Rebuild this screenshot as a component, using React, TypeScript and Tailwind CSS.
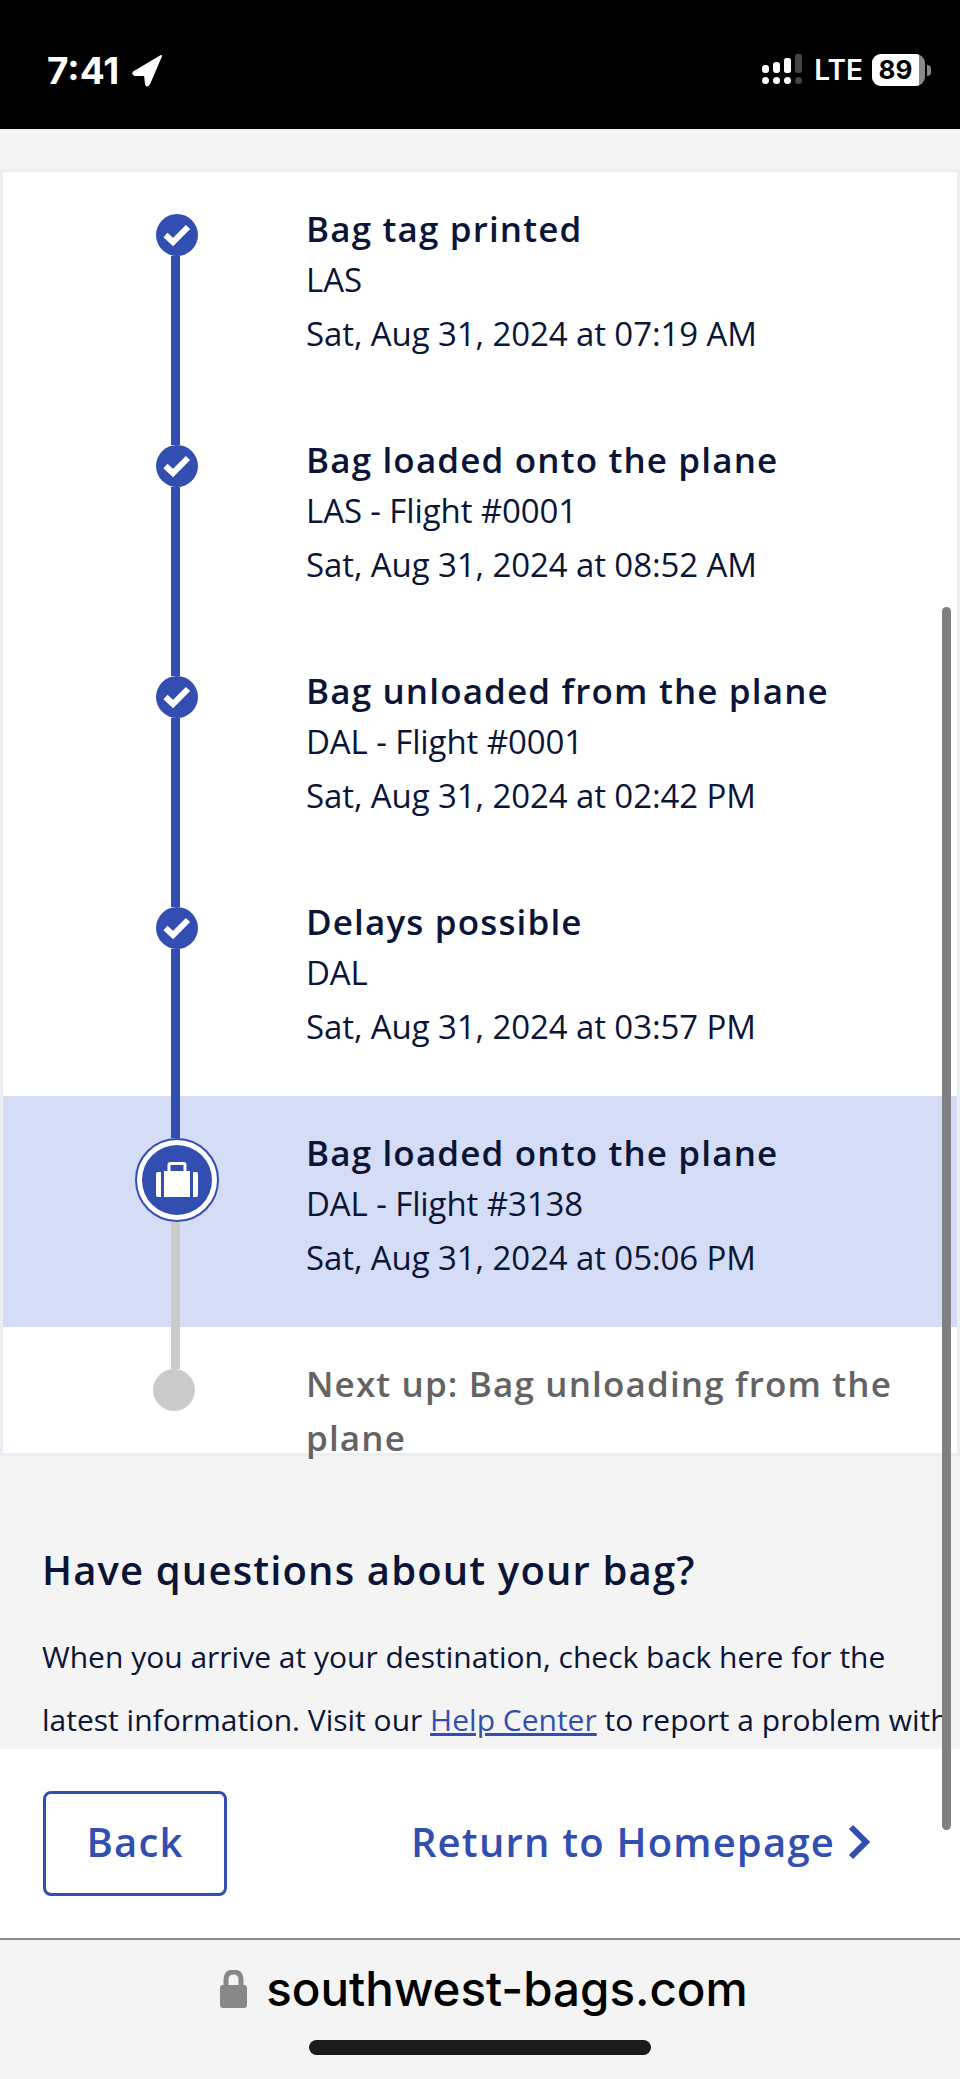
import React from "react";

const rows = [
  { t: "Bag tag printed", a: "LAS", d: "Sat, Aug 31, 2024 at 07:19 AM" },
  { t: "Bag loaded onto the plane", a: "LAS - Flight #0001", d: "Sat, Aug 31, 2024 at 08:52 AM" },
  { t: "Bag unloaded from the plane", a: "DAL - Flight #0001", d: "Sat, Aug 31, 2024 at 02:42 PM" },
  { t: "Delays possible", a: "DAL", d: "Sat, Aug 31, 2024 at 03:57 PM" },
];

function Check() {
  return (
    <div className="ml-[153px] w-[42px] h-[42px] rounded-full bg-[#324eb1] flex items-center justify-center shrink-0">
      <svg width="42" height="42" viewBox="0 0 42 42">
        <path d="M9.5 21 L17 28 L32 13" fill="none" stroke="#fff" strokeWidth="6" />
      </svg>
    </div>
  );
}

function RowText({ t, a, d }: { t: string; a: string; d: string }) {
  return (
    <div className="pt-[30px] -ml-[1px] text-[#0b1537]">
      <div className="text-[35px] leading-[54px] font-semibold tracking-[1.15px] whitespace-nowrap">{t}</div>
      <div className="text-[33px] leading-[53px] -mt-[3px] tracking-[-0.1px] whitespace-nowrap">{a}</div>
      <div className="text-[33px] leading-[53px] mt-[1px] tracking-[-0.1px] whitespace-nowrap">{d}</div>
    </div>
  );
}

export default function App() {
  return (
    <div className="relative w-[960px] h-[2079px] overflow-hidden flex flex-col bg-[#f4f4f4] font-['Open_Sans',sans-serif]">
      {/* status bar */}
      <div className="h-[129px] bg-black shrink-0 flex items-center justify-between pl-[47px] pr-[29px] pt-[11px] font-['Inter',sans-serif] text-white">
        <div className="flex items-center gap-[12px]">
          <span className="text-[37px] font-bold leading-none">7:41</span>
          <svg width="33" height="33" viewBox="0 0 33 33">
            <path d="M30 2 L3 18 Q1 20 4 21 L14 21 L15 30 Q16 33 18 30 Z" fill="#fff" stroke="#fff" strokeWidth="2" strokeLinejoin="round" />
          </svg>
        </div>
        <div className="flex items-center">
          <svg width="41" height="32" viewBox="0 0 41 32" className="mr-[11px]">
            <rect x="0" y="11" width="7" height="8" rx="3" fill="#fff" />
            <rect x="11" y="8" width="7" height="11" rx="3" fill="#fff" />
            <rect x="22" y="4" width="7" height="15" rx="2.5" fill="#fff" />
            <rect x="33" y="0" width="7" height="19" rx="2.5" fill="#444" />
            <circle cx="3.5" cy="26.5" r="3.5" fill="#fff" />
            <circle cx="14.5" cy="26.5" r="3.5" fill="#fff" />
            <circle cx="25.5" cy="26.5" r="3.5" fill="#fff" />
            <circle cx="36.5" cy="26.5" r="3.5" fill="#444" />
          </svg>
          <span className="text-[28px] font-semibold leading-none mr-[9px]">LTE</span>
          <div className="relative w-[53px] h-[32px] rounded-[9px] overflow-hidden bg-[#888] shrink-0">
            <div className="w-[47px] h-[32px] bg-white text-black text-[26px] font-bold leading-[32px] text-center">89</div>
          </div>
          <div className="ml-[2px] w-[4px] h-[11px] rounded-r-full bg-[#888]" />
        </div>
      </div>

      {/* scrolling content */}
      <div className="flex-1 min-h-0 overflow-hidden pt-[40px]">
        <div className="h-[1287px] border-[3px] border-[#ebeef3] bg-white">
          {rows.map((r, i) => (
            <div key={i} className="flex h-[231px]">
              <div className="w-[304px] shrink-0 flex flex-col">
                <div className={`h-[42px] w-[9px] ml-[168px] shrink-0 ${i === 0 ? "bg-transparent" : "bg-[#324eb1]"}`} />
                <Check />
                <div className="flex-1 w-[9px] ml-[168px] bg-[#324eb1]" />
              </div>
              <RowText {...r} />
            </div>
          ))}
          <div className="flex h-[231px] bg-[#d5dcf5]">
            <div className="w-[304px] shrink-0 flex flex-col">
              <div className="h-[42px] w-[9px] ml-[168px] shrink-0 bg-[#324eb1]" />
              <div className="ml-[132px] w-[84px] h-[84px] rounded-full border-[2px] border-[#324eb1] bg-white flex items-center justify-center shrink-0">
                <div className="w-[70px] h-[70px] rounded-full bg-[#324eb1] flex items-center justify-center">
                  <svg width="44" height="36" viewBox="0 0 44 36">
                    <path d="M14 9 V3 Q14 1.5 15.5 1.5 H28.5 Q30 1.5 30 3 V9" fill="none" stroke="#fff" strokeWidth="3" />
                    <path d="M1 12 Q1 10 3 10 H6 V35 H3 Q1 35 1 33 Z" fill="#fff" />
                    <rect x="9" y="9" width="26" height="26" fill="#fff" />
                    <path d="M43 12 Q43 10 41 10 H38 V35 H41 Q43 35 43 33 Z" fill="#fff" />
                  </svg>
                </div>
              </div>
              <div className="flex-1 w-[9px] ml-[168px] bg-[#cbcbcb]" />
            </div>
            <RowText t="Bag loaded onto the plane" a="DAL - Flight #3138" d="Sat, Aug 31, 2024 at 05:06 PM" />
          </div>
          <div className="flex h-[126px]">
            <div className="w-[304px] shrink-0 flex flex-col">
              <div className="h-[42px] w-[9px] ml-[168px] shrink-0 bg-[#cbcbcb]" />
              <div className="ml-[150px] w-[42px] h-[42px] rounded-full bg-[#cbcbcb] shrink-0" />
            </div>
            <div className="pt-[30px] -ml-[1px] w-[640px] text-[35px] leading-[54px] font-semibold tracking-[1.15px] text-[#636363]">
              Next up: Bag unloading from the plane
            </div>
          </div>
        </div>

        <div className="pt-[86px] pl-[42px] text-[#0b1537]">
          <div className="text-[40px] leading-[56px] font-semibold tracking-[1.15px] whitespace-nowrap">Have questions about your bag?</div>
          <div className="mt-[28px] text-[30px] leading-[62px] whitespace-nowrap">
            When you arrive at your destination, check back here for the
            <br />
            <span className="relative top-[1px]">
              latest information. Visit our <a className="text-[#324eb1] underline">Help Center</a> to report a problem with
            </span>
          </div>
        </div>
      </div>

      {/* footer actions */}
      <div className="h-[189px] shrink-0 bg-white flex items-start justify-between pl-[43px] pr-[89px] pt-[42px]">
        <div className="w-[184px] h-[105px] rounded-[8px] border-[3px] border-[#324eb1] flex items-center justify-center pb-[3px] text-[#324eb1] text-[40px] font-semibold tracking-[1.2px]">
          Back
        </div>
        <div className="h-[105px] pb-[3px] flex items-center gap-[12px] text-[#324eb1] text-[40px] font-semibold tracking-[1.2px] whitespace-nowrap">
          Return to Homepage
          <svg width="24" height="36" viewBox="0 0 24 36">
            <path d="M4 3 L19 18 L4 33" fill="none" stroke="#324eb1" strokeWidth="6" />
          </svg>
        </div>
      </div>

      {/* url bar */}
      <div className="h-[141px] shrink-0 border-t-[2px] border-[#8a8a8a] bg-[#f4f4f4] flex flex-col items-center font-['Inter',sans-serif]">
        <div className="h-[100px] flex items-center gap-[19px] pb-[3px] pl-[8px]">
          <svg width="27" height="38" viewBox="0 0 27 38">
            <path d="M6 17 V10 Q6 2 13.5 2 Q21 2 21 10 V17" fill="none" stroke="#888" strokeWidth="5" />
            <rect x="0" y="15" width="27" height="23" rx="3" fill="#888" />
          </svg>
          <span className="text-[47.5px] font-medium leading-none text-black">southwest-bags.com</span>
        </div>
        <div className="w-[342px] h-[15px] rounded-full bg-[#1a1a1a]" />
      </div>

      {/* overlay scrollbar */}
      <div className="absolute left-[942px] top-[607px] w-[9px] h-[1223px] rounded-full bg-[#808080]" />
    </div>
  );
}
